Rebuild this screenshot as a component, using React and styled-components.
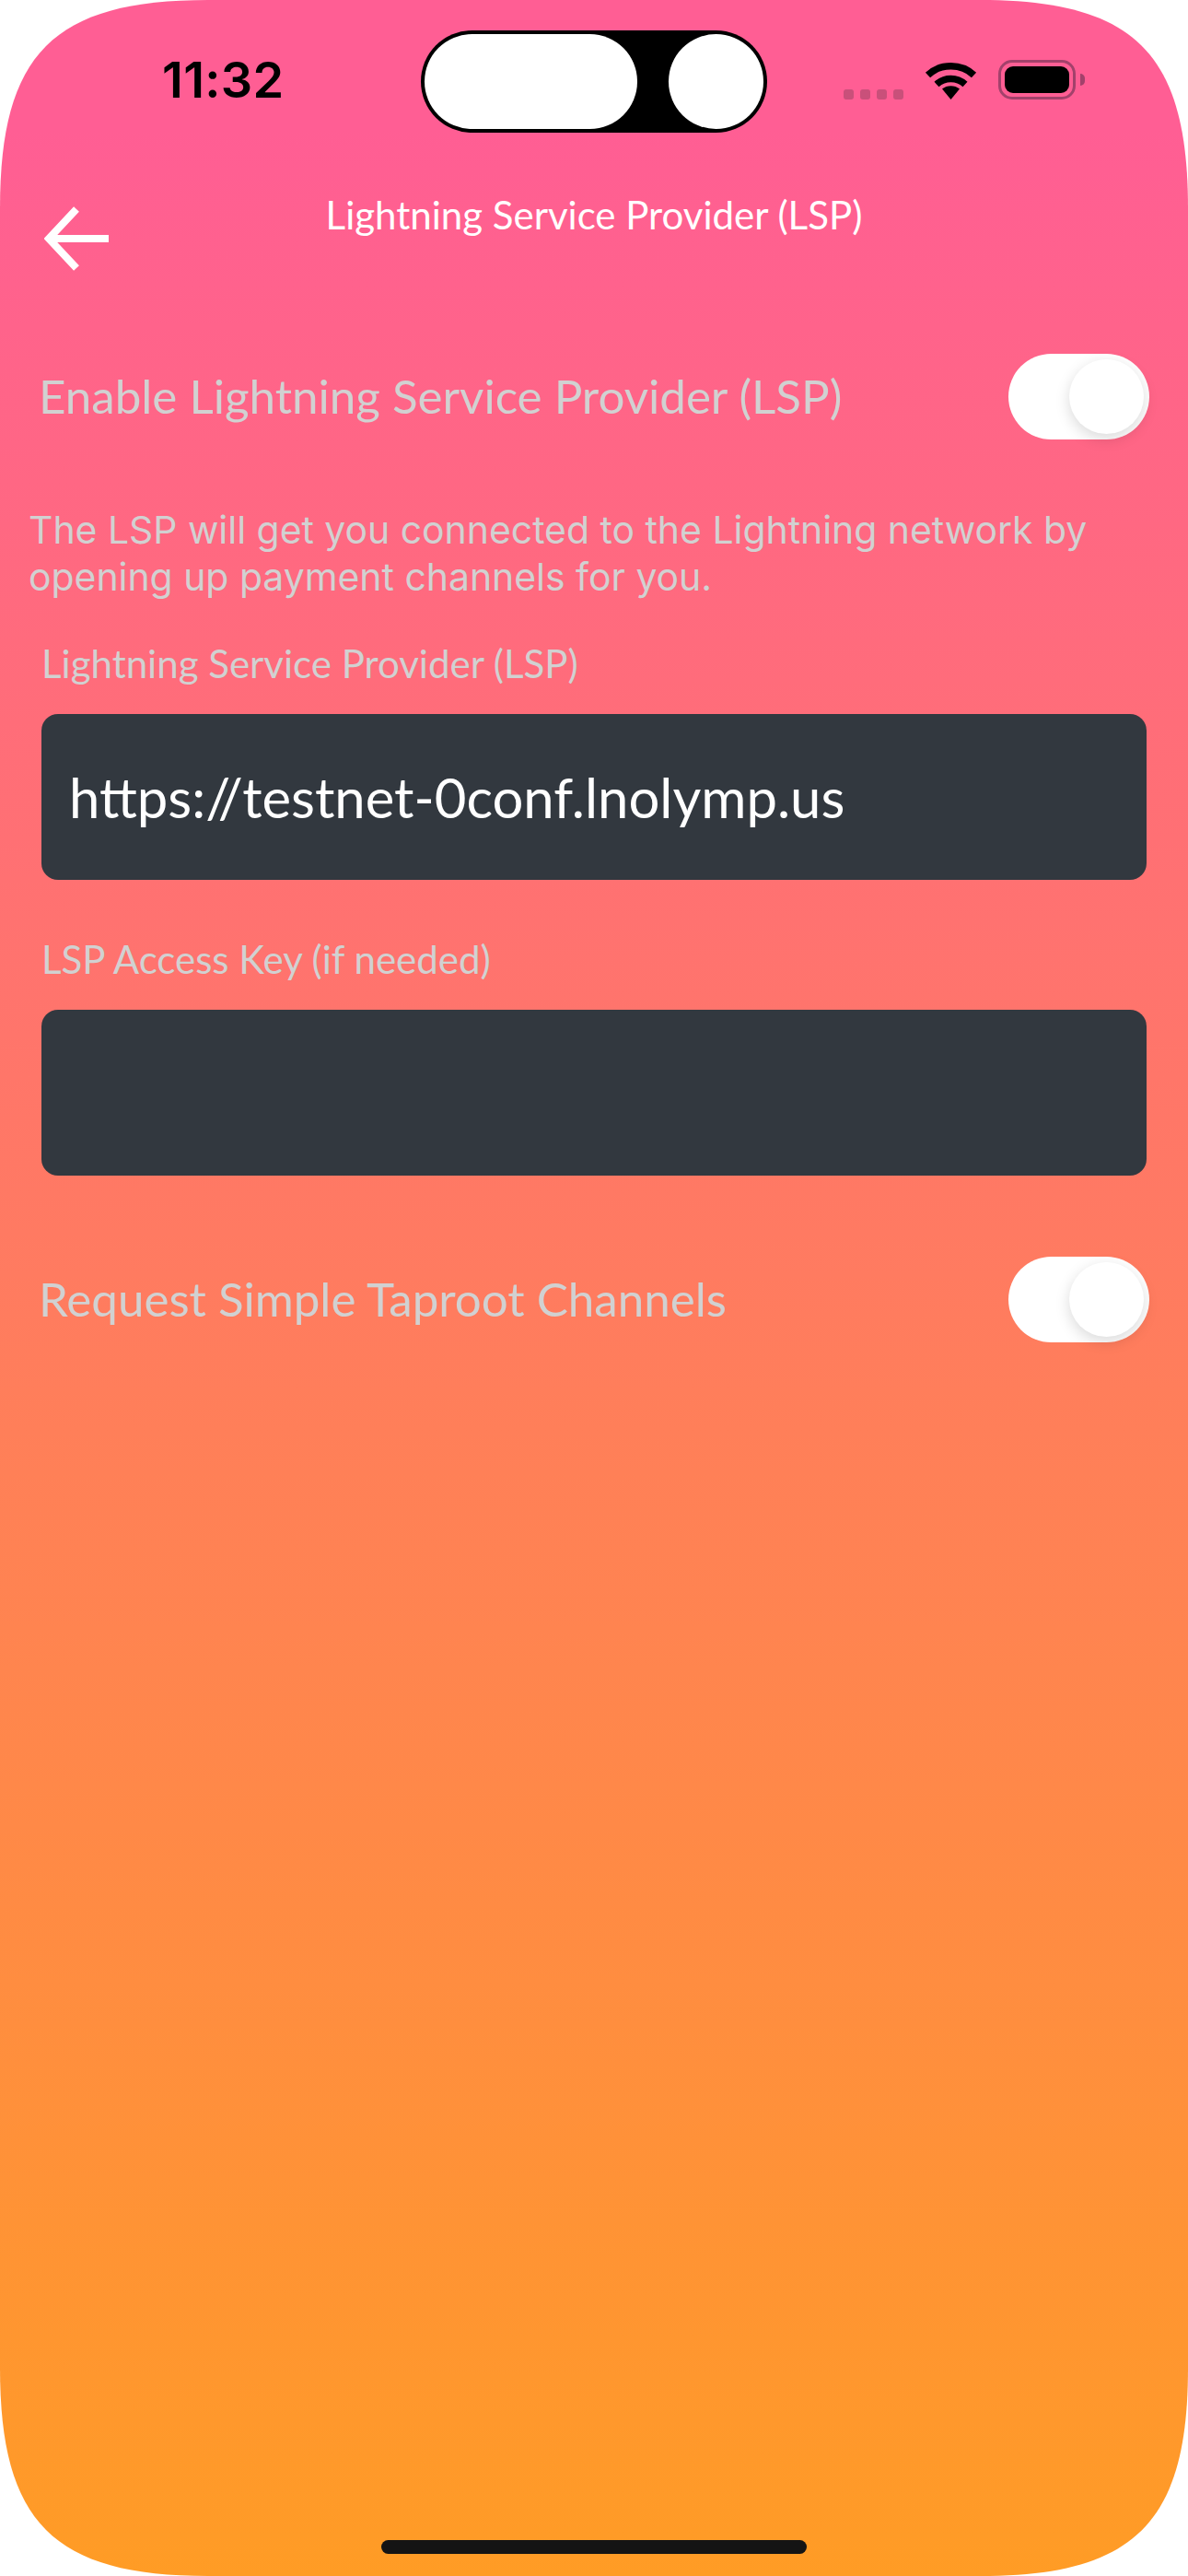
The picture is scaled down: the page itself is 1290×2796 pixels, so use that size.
import React from 'react';
import styled, { createGlobalStyle } from 'styled-components';

const GlobalStyle = createGlobalStyle`
  html, body {
    margin: 0;
    padding: 0;
    background: #fff;
  }
  * {
    box-sizing: border-box;
  }
`;

const App = () => {
  return (
    <>
      <GlobalStyle />
      <Screen>
        <StatusBar>
          <Time>11:32</Time>
          <Island>
            <IslandPill />
            <IslandCamera />
          </Island>
          <StatusIcons>
            <SignalDots>
              <Dot /><Dot /><Dot /><Dot />
            </SignalDots>
            <svg width="57" height="43" viewBox="0 0 57 43" fill="none">
              <path d="M3.5 16.5 C17 3.5 40 3.5 53.5 16.5" stroke="#000" strokeWidth="7.5" />
              <path d="M13 26.5 C22 18.5 35 18.5 44 26.5" stroke="#000" strokeWidth="7.5" />
              <path d="M28.5 43 L19 31.5 C24 27 33 27 38 31.5 Z" fill="#000" />
            </svg>
            <Battery>
              <BatteryLevel />
            </Battery>
            <BatteryNub />
          </StatusIcons>
        </StatusBar>

        <Header>
          <BackButton>
            <svg width="70" height="70" viewBox="0 0 70 70" fill="none">
              <path d="M35 3 L5 35 L35 67 M5 35 H70" stroke="#fff" strokeWidth="8" />
            </svg>
          </BackButton>
          <Title>Lightning Service Provider (LSP)</Title>
        </Header>

        <SwitchRow>
          <SwitchLabel>Enable Lightning Service Provider (LSP)</SwitchLabel>
          <Toggle><Thumb /></Toggle>
        </SwitchRow>

        <Description>
          The LSP will get you connected to the Lightning network by
          <br />
          opening up payment channels for you.
        </Description>

        <Field $top={44}>
          <FieldLabel>Lightning Service Provider (LSP)</FieldLabel>
          <Input defaultValue="https://testnet-0conf.lnolymp.us" />
        </Field>

        <Field $top={62}>
          <FieldLabel>LSP Access Key (if needed)</FieldLabel>
          <Input defaultValue="" />
        </Field>

        <SwitchRow $top={88}>
          <SwitchLabel>Request Simple Taproot Channels</SwitchLabel>
          <Toggle><Thumb /></Toggle>
        </SwitchRow>

        <HomeIndicator />
      </Screen>
    </>
  );
};

export default App;

const Screen = styled.div`
  width: 1290px;
  height: 2796px;
  display: flex;
  flex-direction: column;
  overflow: hidden;
  clip-path: path('M0 226 C0 58 58 0 226 0 H1064 C1232 0 1290 58 1290 226 V2570 C1290 2738 1232 2796 1064 2796 H226 C58 2796 0 2738 0 2570 Z');
  background: linear-gradient(180deg, #ff5e94 5%, #ff9c25 100%);
  font-family: 'Lato', sans-serif;
`;

const StatusBar = styled.div`
  display: grid;
  grid-template-columns: 457px 376px 1fr;
  height: 144px;
  padding-top: 33px;
`;

const Time = styled.div`
  padding: 22px 0 0 176px;
  font-family: 'Inter', sans-serif;
  font-size: 54px;
  line-height: 64px;
  font-weight: 600;
  letter-spacing: 0.3px;
  color: #000;
`;

const Island = styled.div`
  display: flex;
  align-items: center;
  justify-content: space-between;
  height: 111px;
  padding: 0 4px;
  background: #000;
  border-radius: 56px;
`;

const IslandPill = styled.div`
  width: 231px;
  height: 103px;
  background: #fff;
  border-radius: 52px;
`;

const IslandCamera = styled.div`
  width: 103px;
  height: 103px;
  background: #fff;
  border-radius: 50%;
`;

const StatusIcons = styled.div`
  display: flex;
  align-items: flex-end;
  height: 75px;
  padding-left: 83px;
`;

const SignalDots = styled.div`
  display: flex;
  gap: 7px;
  margin-right: 23px;
`;

const Dot = styled.div`
  width: 11px;
  height: 11px;
  border-radius: 3px;
  background: #c9507a;
`;

const Battery = styled.div`
  width: 84px;
  height: 43px;
  margin-left: 23px;
  padding: 4px;
  border: 3px solid #a3416b;
  border-radius: 15px;
`;

const BatteryLevel = styled.div`
  width: 100%;
  height: 100%;
  background: #000;
  border-radius: 9px;
`;

const BatteryNub = styled.div`
  width: 5px;
  height: 13px;
  margin: 0 0 15px 5px;
  background: #a3416b;
  border-radius: 0 6px 6px 0;
`;

const Header = styled.div`
  display: grid;
  grid-template-columns: 1fr auto 1fr;
  height: 240px;
`;

const BackButton = styled.div`
  padding: 80px 0 0 48px;
  line-height: 0;
`;

const Title = styled.div`
  padding-top: 64px;
  font-size: 42px;
  line-height: 50px;
  color: #fff;
`;

const SwitchRow = styled.div`
  display: flex;
  align-items: center;
  justify-content: space-between;
  height: 93px;
  margin-top: ${props => props.$top || 0}px;
  padding: 0 42px 0 42px;
`;

const SwitchLabel = styled.div`
  padding-bottom: 2px;
  font-size: 51.1px;
  color: #d1d1d1;
`;

const Toggle = styled.div`
  display: flex;
  align-items: center;
  justify-content: flex-end;
  width: 153px;
  height: 93px;
  padding-right: 6px;
  background: #fff;
  border-radius: 47px;
`;

const Thumb = styled.div`
  width: 81px;
  height: 81px;
  background: #fff;
  border-radius: 50%;
  box-shadow: 0 5px 16px rgba(0, 0, 0, 0.15);
`;

const Description = styled.div`
  margin-top: 73px;
  padding-left: 31px;
  font-family: 'Inter', sans-serif;
  font-size: 40.9px;
  line-height: 51px;
  color: #d1d1d1;
`;

const Field = styled.div`
  display: flex;
  flex-direction: column;
  margin-top: ${props => props.$top}px;
  padding: 0 45px;
`;

const FieldLabel = styled.div`
  font-size: 42px;
  line-height: 48px;
  color: #d1d1d1;
`;

const Input = styled.input`
  width: 1200px;
  height: 180px;
  margin-top: 31px;
  padding: 0 30px;
  border: 0;
  border-radius: 18px;
  outline: none;
  background: #32383f;
  font-family: 'Lato', sans-serif;
  font-size: 59.8px;
  color: #fff;
`;

const HomeIndicator = styled.div`
  width: 462px;
  height: 15px;
  margin: auto auto 24px;
  background: #141414;
  border-radius: 8px;
`;
